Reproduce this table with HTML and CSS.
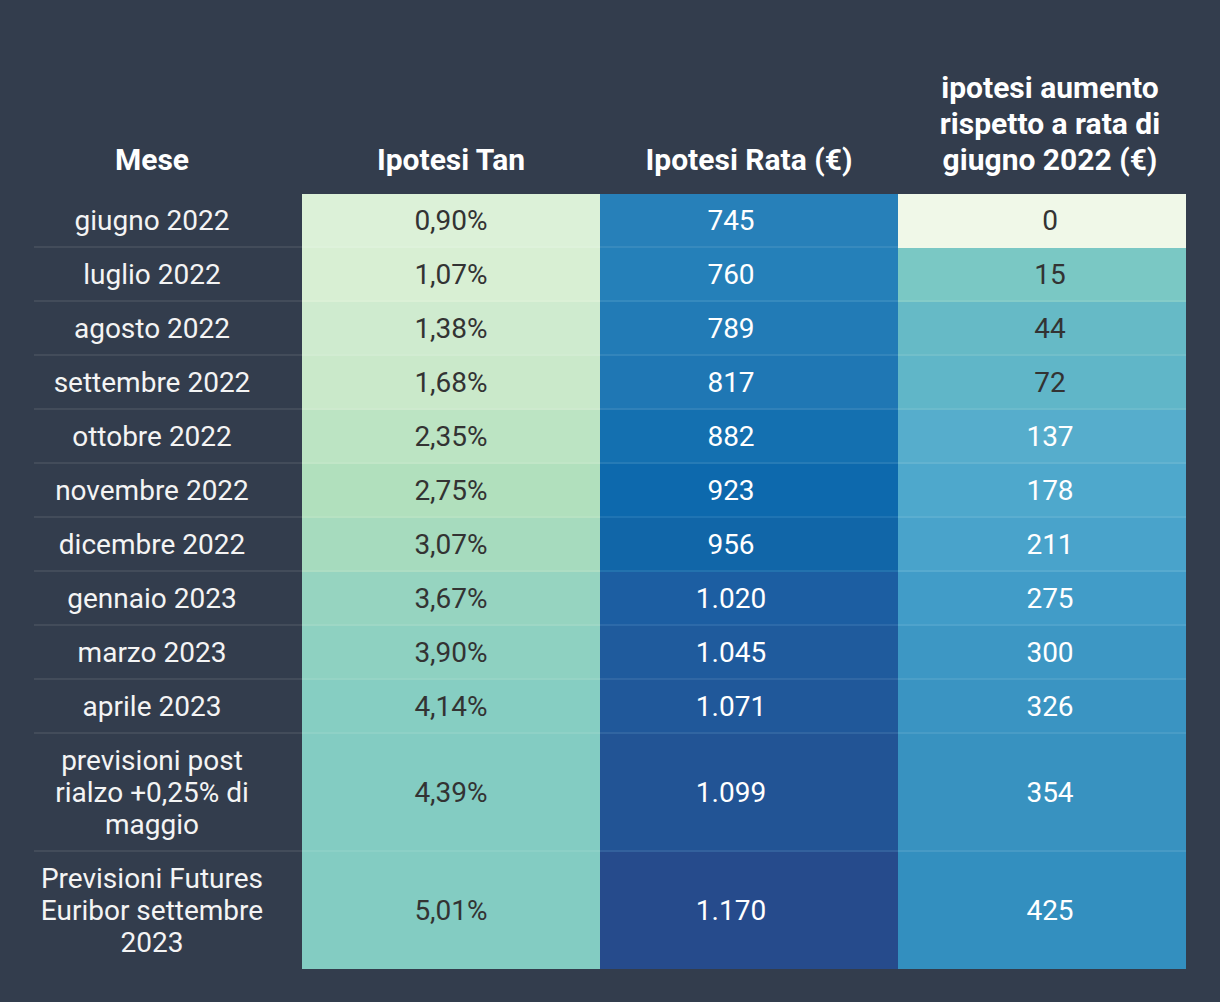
FILE: index.html
```html
<!DOCTYPE html>
<html lang="it">
<head>
<meta charset="utf-8">
<title>Ipotesi rata</title>
<link rel="stylesheet" href="styles.css">
</head>
<body>
<table class="grid">
  <colgroup>
    <col class="c-mese">
    <col class="c-tan">
    <col class="c-rata">
    <col class="c-aum">
  </colgroup>
  <thead>
    <tr>
      <th class="hm">Mese</th>
      <th>Ipotesi Tan</th>
      <th>Ipotesi Rata (€)</th>
      <th class="ha">ipotesi aumento<br>rispetto a rata di<br>giugno 2022 (€)</th>
    </tr>
  </thead>
  <tbody>
    <tr><td class="m">giugno 2022</td><td class="t t1">0,90%</td><td class="r r1">745</td><td class="a a1">0</td></tr>
    <tr><td class="m">luglio 2022</td><td class="t t2">1,07%</td><td class="r r2">760</td><td class="a a2">15</td></tr>
    <tr><td class="m">agosto 2022</td><td class="t t3">1,38%</td><td class="r r3">789</td><td class="a a3">44</td></tr>
    <tr><td class="m">settembre 2022</td><td class="t t4">1,68%</td><td class="r r4">817</td><td class="a a4">72</td></tr>
    <tr><td class="m">ottobre 2022</td><td class="t t5">2,35%</td><td class="r r5">882</td><td class="a a5">137</td></tr>
    <tr><td class="m">novembre 2022</td><td class="t t6">2,75%</td><td class="r r6">923</td><td class="a a6">178</td></tr>
    <tr><td class="m">dicembre 2022</td><td class="t t7">3,07%</td><td class="r r7">956</td><td class="a a7">211</td></tr>
    <tr><td class="m">gennaio 2023</td><td class="t t8">3,67%</td><td class="r r8">1.020</td><td class="a a8">275</td></tr>
    <tr><td class="m">marzo 2023</td><td class="t t9">3,90%</td><td class="r r9">1.045</td><td class="a a9">300</td></tr>
    <tr><td class="m">aprile 2023</td><td class="t t10">4,14%</td><td class="r r10">1.071</td><td class="a a10">326</td></tr>
    <tr><td class="m">previsioni post<br>rialzo +0,25% di<br>maggio</td><td class="t t11">4,39%</td><td class="r r11">1.099</td><td class="a a11">354</td></tr>
    <tr class="last"><td class="m">Previsioni Futures<br>Euribor settembre<br>2023</td><td class="t t12">5,01%</td><td class="r r12">1.170</td><td class="a a12">425</td></tr>
  </tbody>
</table>
</body>
</html>
```

FILE: styles.css
```css
html, body {
  margin: 0;
  padding: 0;
  background: #333d4d;
}
body {
  padding: 70px 34px 0;
  font-family: Roboto, "Liberation Sans", sans-serif;
  color: #ffffff;
}
.grid {
  border-collapse: separate;
  border-spacing: 0;
  table-layout: fixed;
  width: 1152px;
}
.c-mese { width: 268px; }
.c-tan { width: 298px; }
.c-rata { width: 298px; }
.c-aum { width: 288px; }

.grid th {
  font-size: 30px;
  font-weight: 700;
  line-height: 36px;
  text-align: center;
  vertical-align: bottom;
  padding: 0 0 16px;
  color: #ffffff;
}
.grid th.hm { padding-right: 32px; }
.grid th.ha { padding-left: 16px; }

.grid td {
  font-size: 28px;
  font-weight: 400;
  line-height: 32px;
  text-align: center;
  vertical-align: middle;
  padding: 11px 0;
  box-shadow: inset 0 -2px 0 rgba(255, 255, 255, 0.08);
}
.grid tr.last td {
  box-shadow: none;
  padding-bottom: 10px;
}
.grid td.m { color: #f4f4f4; padding-right: 32px; }
.grid td.t { color: #333333; }
.grid td.r { color: #ffffff; padding-right: 36px; }
.grid td.a { color: #ffffff; padding-left: 16px; }
.grid td.a1, .grid td.a2, .grid td.a3, .grid td.a4 { color: #333333; }

.t1 { background: #dcf1d8; }
.t2 { background: #d8efd3; }
.t3 { background: #cfebcf; }
.t4 { background: #cae9ca; }
.t5 { background: #bce4c3; }
.t6 { background: #b1e0bd; }
.t7 { background: #a6dbbe; }
.t8 { background: #96d4c0; }
.t9 { background: #8ed1c1; }
.t10 { background: #86cec2; }
.t11 { background: #83ccc2; }
.t12 { background: #83ccc2; }

.r1 { background: #2780b9; }
.r2 { background: #2580b9; }
.r3 { background: #227bb6; }
.r4 { background: #1f77b4; }
.r5 { background: #1470b0; }
.r6 { background: #0d69ad; }
.r7 { background: #1166a8; }
.r8 { background: #1c5ea2; }
.r9 { background: #1f5b9d; }
.r10 { background: #20589a; }
.r11 { background: #225495; }
.r12 { background: #264b8c; }

.a1 { background: #f0f8e8; }
.a2 { background: #7ac8c4; }
.a3 { background: #66bac6; }
.a4 { background: #60b6c8; }
.a5 { background: #56adcc; }
.a6 { background: #4ea8cc; }
.a7 { background: #49a3cb; }
.a8 { background: #419cc8; }
.a9 { background: #3d97c4; }
.a10 { background: #3a94c2; }
.a11 { background: #3892c0; }
.a12 { background: #338fbf; }
```
